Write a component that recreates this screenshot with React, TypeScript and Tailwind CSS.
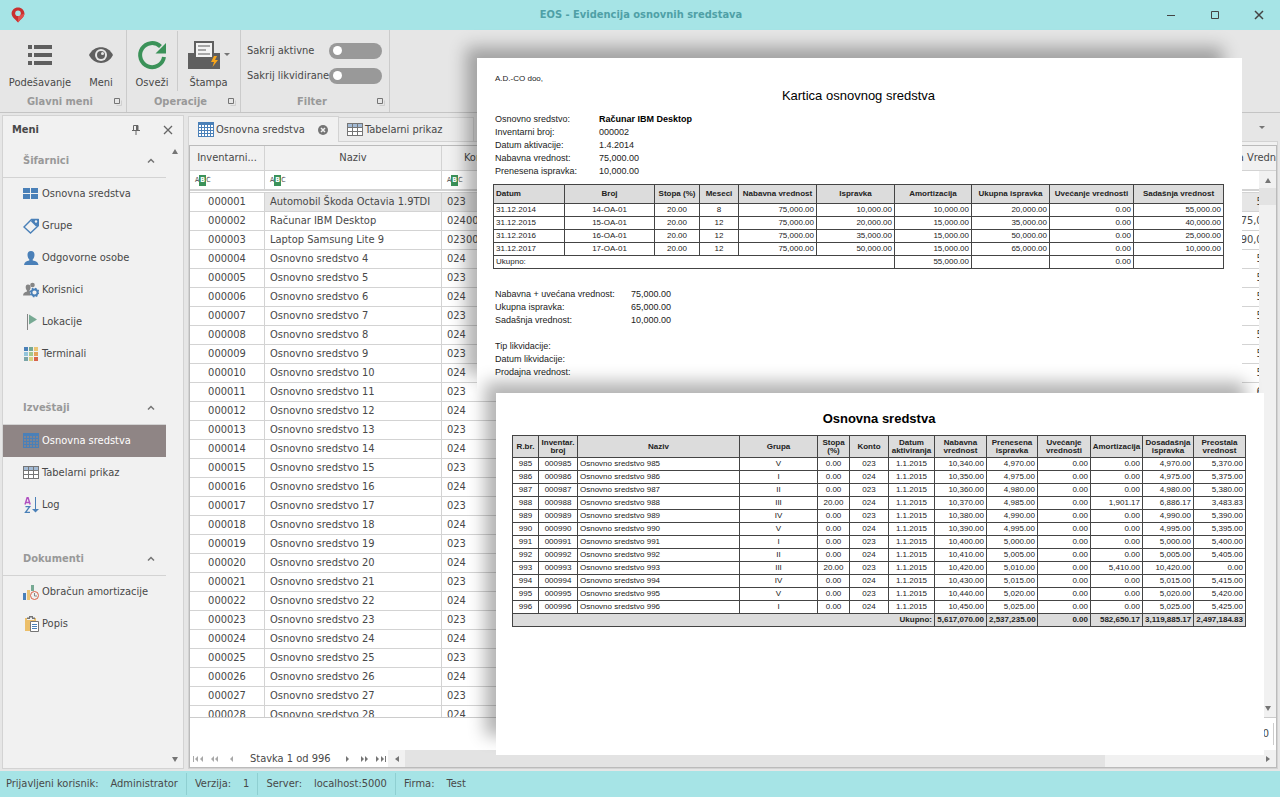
import type { ReactNode } from "react";

// ── DATA ────────────────────────────────────────────────────────────────

const NAMES: Record<number, string> = {
  1: "Automobil Škoda Octavia 1.9TDI",
  2: "Računar IBM Desktop",
  3: "Laptop Samsung Lite 9",
};
const ACCOUNTS: Record<number, string> = { 2: "02400", 3: "02300" };
const VALUES: Record<number, string> = { 2: "75,000.00", 3: "90,000.00" };

const ASSETS = Array.from({ length: 28 }, (_, i) => {
  const n = i + 1;
  return {
    id: String(n).padStart(6, "0"),
    name: NAMES[n] ?? `Osnovno sredstvo ${n}`,
    account: ACCOUNTS[n] ?? (n % 2 ? "023" : "024"),
    value: VALUES[n] ?? `${490 + n * 10}.00`,
  };
});

const CARD_HEAD = [
  "Datum",
  "Broj",
  "Stopa (%)",
  "Meseci",
  "Nabavna vrednost",
  "Ispravka",
  "Amortizacija",
  "Ukupna ispravka",
  "Uvećanje vrednosti",
  "Sadašnja vrednost",
];
const CARD_WIDTHS = [71, 90, 45, 39, 78, 78, 77, 78, 84, 90];
const CARD_ROWS = [
  ["31.12.2014", "14-OA-01", "20.00", "8", "75,000.00", "10,000.00", "10,000.00", "20,000.00", "0.00", "55,000.00"],
  ["31.12.2015", "15-OA-01", "20.00", "12", "75,000.00", "20,000.00", "15,000.00", "35,000.00", "0.00", "40,000.00"],
  ["31.12.2016", "16-OA-01", "20.00", "12", "75,000.00", "35,000.00", "15,000.00", "50,000.00", "0.00", "25,000.00"],
  ["31.12.2017", "17-OA-01", "20.00", "12", "75,000.00", "50,000.00", "15,000.00", "65,000.00", "0.00", "10,000.00"],
];

const LIST_HEAD = [
  "R.br.",
  "Inventar. broj",
  "Naziv",
  "Grupa",
  "Stopa (%)",
  "Konto",
  "Datum aktiviranja",
  "Nabavna vrednost",
  "Prenesena ispravka",
  "Uvećanje vrednosti",
  "Amortizacija",
  "Dosadašnja ispravka",
  "Preostala vrednost",
];
const LIST_WIDTHS = [26, 39, 162, 78, 32, 39, 46, 52, 51, 53, 52, 51, 52];
// [number, group, rate, cost, carried over, depreciation, to date, remaining]
const LIST_ROWS = [
  ["985", "V", "0.00", "10,340.00", "4,970.00", "0.00", "4,970.00", "5,370.00"],
  ["986", "I", "0.00", "10,350.00", "4,975.00", "0.00", "4,975.00", "5,375.00"],
  ["987", "II", "0.00", "10,360.00", "4,980.00", "0.00", "4,980.00", "5,380.00"],
  ["988", "III", "20.00", "10,370.00", "4,985.00", "1,901.17", "6,886.17", "3,483.83"],
  ["989", "IV", "0.00", "10,380.00", "4,990.00", "0.00", "4,990.00", "5,390.00"],
  ["990", "V", "0.00", "10,390.00", "4,995.00", "0.00", "4,995.00", "5,395.00"],
  ["991", "I", "0.00", "10,400.00", "5,000.00", "0.00", "5,000.00", "5,400.00"],
  ["992", "II", "0.00", "10,410.00", "5,005.00", "0.00", "5,005.00", "5,405.00"],
  ["993", "III", "20.00", "10,420.00", "5,010.00", "5,410.00", "10,420.00", "0.00"],
  ["994", "IV", "0.00", "10,430.00", "5,015.00", "0.00", "5,015.00", "5,415.00"],
  ["995", "V", "0.00", "10,440.00", "5,020.00", "0.00", "5,020.00", "5,420.00"],
  ["996", "I", "0.00", "10,450.00", "5,025.00", "0.00", "5,025.00", "5,425.00"],
];

// ── ICONS ───────────────────────────────────────────────────────────────

function PinLogo() {
  return (
    <svg className="h-4 w-4" viewBox="0 0 16 16">
      <path d="M8 0.5C4.4 0.5 1.6 3.2 1.6 6.5C1.6 9.8 5 12 8 15.6C11 12 14.4 9.8 14.4 6.5C14.4 3.2 11.6 0.5 8 0.5Z" fill="#c9302f" />
      <path d="M8 15.6C11 12 14.4 9.8 14.4 6.5L8 9Z" fill="#e0504d" />
      <circle cx="8" cy="6.2" r="2.8" fill="#a6e4e6" />
    </svg>
  );
}

function ListIcon() {
  return (
    <svg className="h-8 w-8" viewBox="0 0 32 32" fill="#5f5f5f">
      <path d="M4 6h4v4H4zM10 6h18v4H10zM4 14h4v4H4zM10 14h18v4H10zM4 22h4v4H4zM10 22h18v4H10z" />
    </svg>
  );
}

function EyeIcon() {
  return (
    <svg className="h-8 w-8" viewBox="0 0 32 32">
      <path d="M4 16C9 5.500 23 5.500 28 16C23 26.500 9 26.500 4 16Z" fill="#5f5f5f" />
      <circle cx="16" cy="16" r="6" fill="#e6e6e6" />
      <circle cx="16" cy="16" r="4" fill="#5f5f5f" />
      <circle cx="17.500" cy="14.500" r="1.500" fill="#e6e6e6" />
    </svg>
  );
}

function RefreshIcon() {
  return (
    <svg className="h-8 w-8" viewBox="0 0 32 32">
      <path d="M28 18A12 12 0 1 1 24.500 7.500" fill="none" stroke="#3b9259" strokeWidth="4" />
      <path d="M30 4V14.500H19.500Z" fill="#3b9259" />
    </svg>
  );
}

function PrintIcon() {
  return (
    <svg className="h-8 w-8" viewBox="0 0 32 32">
      <path d="M0 14H32V30H0Z" fill="#5f5f5f" />
      <path d="M6 17V2H26V17Z" fill="#5f5f5f" />
      <path d="M8 4H24V18H8Z" fill="#f3f3f3" />
      <path d="M10 7H22M10 11H18M10 15H22" stroke="#a6a6a6" strokeWidth="2" />
      <path d="M26 17L23 23H26L24.500 28L30 21H27L29 17Z" fill="#f9a61a" />
    </svg>
  );
}

function TilesIcon() {
  return (
    <svg className="h-4 w-4" viewBox="0 0 16 16" fill="#4a80b8">
      <path d="M0 2h7v5H0zM8 2h7v5H8zM0 8h7v5H0zM8 8h7v5H8z" />
    </svg>
  );
}

function TagIcon() {
  return (
    <svg className="h-4 w-4" viewBox="0 0 16 16">
      <path d="M8.500 1.500H15V8L7.500 15L1 9Z" fill="none" stroke="#4a80b8" strokeWidth="1.400" />
      <path d="M9 1H16V8L13 8.500L8 3.500Z" fill="#4a80b8" />
      <circle cx="13" cy="3.500" r="1.200" fill="#f1f1f1" />
    </svg>
  );
}

function PersonIcon() {
  return (
    <svg className="h-4 w-4" viewBox="0 0 16 16" fill="#4a80b8">
      <path d="M8 1C5.600 1 4.400 2.600 4.500 5C4.600 7 5.400 8.600 6.300 9.400V10.600C3.500 11.200 1.500 12 1 15H15.500C15 12 12.500 11.200 9.700 10.600V9.400C10.600 8.600 11.400 7 11.500 5C11.600 2.600 10.400 1 8 1Z" />
    </svg>
  );
}

function UsersIcon() {
  return (
    <svg className="h-4 w-4" viewBox="0 0 16 16">
      <circle cx="9.500" cy="3" r="2.300" fill="#858585" />
      <path d="M5 2.500C3.400 2.500 2.600 3.600 2.700 5.300C2.800 7 3.300 8 4 8.700V9.600C1.800 10.100 0.300 11 0 13.500H7V9.500L6.500 8.500C7.200 7.800 7.600 6.700 7.600 5.300C7.600 3.600 6.700 2.500 5 2.500Z" fill="#858585" />
      <circle cx="11.500" cy="10.500" r="3" fill="#f1f1f1" stroke="#4a80b8" strokeWidth="1.800" />
      <circle cx="11.500" cy="10.500" r="4.200" fill="none" stroke="#4a80b8" strokeWidth="1.400" strokeDasharray="1.600 1.700" />
    </svg>
  );
}

function FlagIcon() {
  return (
    <svg className="h-4 w-4" viewBox="0 0 16 16">
      <path d="M4.500 0V16" stroke="#858585" />
      <path d="M6 0.500L14 5.500L6 10.500Z" fill="#77a993" />
    </svg>
  );
}

function PaletteIcon() {
  return (
    <svg className="h-4 w-4" viewBox="0 0 16 16">
      <path d="M1 1h4v4H1z" fill="#4a80b8" />
      <path d="M6 1h4v4H6z" fill="#77a993" />
      <path d="M11 1h4v4h-4z" fill="#ecc574" />
      <path d="M1 6h4v4H1z" fill="#93c5dc" />
      <path d="M6 6h4v4H6z" fill="#a5c68c" />
      <path d="M11 6h4v4h-4z" fill="#e5a35a" />
      <path d="M1 11h4v4H1z" fill="#7aa5a8" />
      <path d="M6 11h4v4H6z" fill="#d8d07f" />
      <path d="M11 11h4v4h-4z" fill="#d8634a" />
    </svg>
  );
}

function SheetIcon({ lines = "#ffffff" }: { lines?: string }) {
  return (
    <svg className="h-4 w-4" viewBox="0 0 16 16" shapeRendering="crispEdges">
      <path d="M0 0h16v15H0z" fill="#4a80b8" />
      <path
        d="M1 3h2v2H1zM4 3h2v2H4zM7 3h2v2H7zM10 3h2v2h-2zM13 3h2v2h-2zM1 6h2v2H1zM4 6h2v2H4zM7 6h2v2H7zM10 6h2v2h-2zM13 6h2v2h-2zM1 9h2v2H1zM4 9h2v2H4zM7 9h2v2H7zM10 9h2v2h-2zM13 9h2v2h-2zM1 12h2v2H1zM4 12h2v2H4zM7 12h2v2H7zM10 12h2v2h-2zM13 12h2v2h-2z"
        fill={lines}
      />
    </svg>
  );
}

function TableIcon() {
  return (
    <svg className="h-4 w-4" viewBox="0 0 16 16" shapeRendering="crispEdges">
      <path d="M0 1h16v13H0z" fill="#757575" />
      <path d="M1 2h4v3H1zM6 2h4v3H6zM11 2h4v3h-4z" fill="#a3bbd6" />
      <path d="M1 6h4v3H1zM6 6h4v3H6zM11 6h4v3h-4zM1 10h4v3H1zM6 10h4v3H6zM11 10h4v3h-4z" fill="#ffffff" />
    </svg>
  );
}

function SortIcon() {
  return (
    <svg className="h-4 w-4" viewBox="0 0 16 16" fill="none">
      <path d="M2 7.500L4.200 0.500H5L7.200 7.500M3 5.500H6.300" stroke="#b04fc0" strokeWidth="1.400" />
      <path d="M2.500 9.700H6.700L2.500 15.300H7" stroke="#4a80b8" strokeWidth="1.300" />
      <path d="M12.500 0V13" stroke="#4a80b8" />
      <path d="M9 12H16L12.500 15.500Z" fill="#4a80b8" />
    </svg>
  );
}

function ChartClockIcon() {
  return (
    <svg className="h-4 w-4" viewBox="0 0 16 16">
      <path d="M0 9h3v7H0z" fill="#4a80b8" />
      <path d="M4 6h3v10H4z" fill="#ecc574" />
      <path d="M8 1h3v6H8z" fill="#77a993" />
      <circle cx="11.500" cy="11.500" r="4" fill="#f1f1f1" stroke="#d8634a" />
      <path d="M11.500 9V12H14" fill="none" stroke="#858585" />
    </svg>
  );
}

function ClipboardIcon() {
  return (
    <svg className="h-4 w-4" viewBox="0 0 16 16">
      <path d="M2 2h2v2h7V2h2v3H7v10H2z" fill="#ecbf6a" />
      <path d="M4 3V1.500H6V0H10V1.500H12V3H9V1.500H7V3Z" fill="#757575" />
      <path d="M7.500 5.500H15.500V15.500H7.500Z" fill="#ffffff" stroke="#757575" />
      <path d="M9 8.500H14M9 10.500H14M9 12.500H14" stroke="#4a80b8" />
    </svg>
  );
}

function LauncherIcon() {
  return (
    <svg className="h-2 w-2" viewBox="0 0 8 8" fill="none">
      <path d="M7.500 2.500V7.500H2.500" stroke="#cfcfcf" />
      <path d="M0.500 0.500H5.500V5.500H0.500Z" stroke="#757575" />
    </svg>
  );
}

// Small solid triangle used by scroll bars, drop-downs and the record navigator
function Arrow({ dir, color = "#757575" }: { dir: "up" | "down" | "left" | "right"; color?: string }) {
  const paths = {
    up: "M0 6L3 1L6 6Z",
    down: "M0 1L3 6L6 1Z",
    left: "M5 0L1 3L5 6Z",
    right: "M1 0L5 3L1 6Z",
  };
  return (
    <svg className="h-1.5 w-1.5" viewBox="0 0 6 6">
      <path d={paths[dir]} fill={color} />
    </svg>
  );
}

// Narrow variant for the paired arrows in the record navigator
function NavArrow({ dir, color = "#757575" }: { dir: "left" | "right"; color?: string }) {
  return (
    <svg className="h-1.5 w-1" viewBox="0 0 4 6">
      <path d={dir === "left" ? "M3 0L0 3L3 6Z" : "M1 0L4 3L1 6Z"} fill={color} />
    </svg>
  );
}

function Caret() {
  return (
    <svg className="h-1 w-1.5" viewBox="0 0 6 4">
      <path d="M0 0H6L3 3Z" fill="#757575" />
    </svg>
  );
}

// ── TITLE BAR + RIBBON ──────────────────────────────────────────────────

function TitleBar() {
  return (
    <header className="flex h-[30px] shrink-0 items-center bg-[#a6e4e6] pr-2 pl-2.5">
      <div className="flex flex-1 items-center">
        <PinLogo />
      </div>
      <h1 className="font-bold text-[#4fa0a6]">EOS - Evidencija osnovnih sredstava</h1>
      <div className="flex flex-1 items-center justify-end gap-[18px]">
        <button type="button" aria-label="Minimize" className="p-2">
          <svg className="h-2.5 w-2.5" viewBox="0 0 10 10">
            <path d="M1 5.500H9" stroke="#444444" />
          </svg>
        </button>
        <button type="button" aria-label="Maximize" className="p-2">
          <svg className="h-2.5 w-2.5" viewBox="0 0 10 10">
            <path d="M1.500 1.500H8.500V8.500H1.500Z" fill="none" stroke="#444444" />
          </svg>
        </button>
        <button type="button" aria-label="Close" className="p-2">
          <svg className="h-2.5 w-2.5" viewBox="0 0 10 10">
            <path d="M1 1L9 9M9 1L1 9" stroke="#444444" strokeWidth="1.500" />
          </svg>
        </button>
      </div>
    </header>
  );
}

function RibbonGroup({ title, className, children }: { title: string; className: string; children: ReactNode }) {
  return (
    <section className={`flex shrink-0 flex-col border-r border-[#cbcbcb] ${className}`}>
      <div className="flex flex-1 items-center">{children}</div>
      <div className="flex h-5 items-center pr-1 pl-1.5">
        <h2 className="flex-1 text-center font-bold text-[#999999]">{title}</h2>
        <button type="button" aria-label={`${title} – opcije`}>
          <LauncherIcon />
        </button>
      </div>
    </section>
  );
}

function RibbonButton({ label, className, children }: { label: string; className: string; children: ReactNode }) {
  return (
    <button type="button" className={`flex shrink-0 flex-col items-center gap-1 pt-2 ${className}`}>
      {children}
      <span className="leading-4">{label}</span>
    </button>
  );
}

function Toggle({ label }: { label: string }) {
  return (
    <label className="flex items-center justify-between whitespace-nowrap">
      {label}
      <input
        type="checkbox"
        role="switch"
        className="flex h-4 w-[53px] shrink-0 appearance-none items-center rounded-full bg-[#999999] pl-1 before:block before:h-[9px] before:w-[9px] before:rounded-full before:bg-white checked:justify-end checked:bg-[#4a80b8] checked:pr-1"
      />
    </label>
  );
}

function Ribbon() {
  return (
    <div className="flex h-[83px] shrink-0 border-b border-[#c4c4c4]">
      <RibbonGroup title="Glavni meni" className="w-[127px]">
        <RibbonButton label="Podešavanje" className="w-20">
          <ListIcon />
        </RibbonButton>
        <RibbonButton label="Meni" className="w-[42px]">
          <EyeIcon />
        </RibbonButton>
      </RibbonGroup>
      <RibbonGroup title="Operacije" className="w-[114px]">
        <RibbonButton label="Osveži" className="w-[50px]">
          <RefreshIcon />
        </RibbonButton>
        <RibbonButton label="Štampa" className="w-[62px] border-l border-[#cbcbcb]">
          <span className="flex items-center gap-1">
            <PrintIcon />
            <Caret />
          </span>
        </RibbonButton>
      </RibbonGroup>
      <RibbonGroup title="Filter" className="w-[149px]">
        <div className="flex w-full flex-col gap-[9px] pt-1 pr-[7px] pl-1.5">
          <Toggle label="Sakrij aktivne" />
          <Toggle label="Sakrij likvidirane" />
        </div>
      </RibbonGroup>
    </div>
  );
}

// ── SIDE MENU ───────────────────────────────────────────────────────────

function MenuGroup({ title, children }: { title: string; children: ReactNode }) {
  return (
    <section className="mb-[21px]">
      <button
        type="button"
        className="flex h-[34px] w-full items-center justify-between border-b border-[#d3d3d3] pr-[11px] pl-5 font-bold text-[#999999]"
      >
        {title}
        <svg className="h-2 w-2" viewBox="0 0 8 8">
          <path d="M1 5.500L4 2.500L7 5.500" fill="none" stroke="#757575" strokeWidth="1.500" />
        </svg>
      </button>
      <ul>{children}</ul>
    </section>
  );
}

function MenuItem({ label, icon, active = false }: { label: string; icon: ReactNode; active?: boolean }) {
  return (
    <li>
      <a
        href="#"
        className={`flex h-8 items-center gap-[3px] pl-5 ${active ? "bg-[#8f8585] text-white" : ""}`}
      >
        {icon}
        {label}
      </a>
    </li>
  );
}

function SideMenu() {
  return (
    <nav className="flex w-[182px] shrink-0 flex-col border border-[#d3d3d3] bg-[#f1f1f1]">
      <div className="flex h-7 shrink-0 items-center pr-2.5 pl-[9px]">
        <h2 className="flex-1 font-bold">Meni</h2>
        <div className="flex gap-[22px]">
          <button type="button" aria-label="Zakači meni">
            <svg className="h-2.5 w-2.5" viewBox="0 0 10 10">
              <path d="M2.500 0.500H7V5.500M2.500 0.500V5.500M1 5.500H9M5 6V10" fill="none" stroke="#666666" />
              <path d="M5 1h2v5H5z" fill="#666666" />
            </svg>
          </button>
          <button type="button" aria-label="Zatvori meni">
            <svg className="h-2.5 w-2.5" viewBox="0 0 10 10">
              <path d="M1 1L9 9M9 1L1 9" stroke="#666666" strokeWidth="1.300" />
            </svg>
          </button>
        </div>
      </div>
      <div className="flex min-h-0 flex-1">
        <div className="flex-1 overflow-hidden">
          <MenuGroup title="Šifarnici">
            <MenuItem label="Osnovna sredstva" icon={<TilesIcon />} />
            <MenuItem label="Grupe" icon={<TagIcon />} />
            <MenuItem label="Odgovorne osobe" icon={<PersonIcon />} />
            <MenuItem label="Korisnici" icon={<UsersIcon />} />
            <MenuItem label="Lokacije" icon={<FlagIcon />} />
            <MenuItem label="Terminali" icon={<PaletteIcon />} />
          </MenuGroup>
          <MenuGroup title="Izveštaji">
            <MenuItem label="Osnovna sredstva" icon={<SheetIcon lines="#7f8390" />} active />
            <MenuItem label="Tabelarni prikaz" icon={<TableIcon />} />
            <MenuItem label="Log" icon={<SortIcon />} />
          </MenuGroup>
          <MenuGroup title="Dokumenti">
            <MenuItem label="Obračun amortizacije" icon={<ChartClockIcon />} />
            <MenuItem label="Popis" icon={<ClipboardIcon />} />
          </MenuGroup>
        </div>
        <div className="flex w-[17px] flex-col items-center justify-between pt-1 pb-1.5">
          <Arrow dir="up" />
          <Arrow dir="down" />
        </div>
      </div>
    </nav>
  );
}

// ── ASSET GRID ──────────────────────────────────────────────────────────

function GridCols() {
  return (
    <colgroup>
      <col className="w-[75px]" />
      <col className="w-[177px]" />
      <col className="w-[73px]" />
      <col />
      <col className="w-[100px]" />
    </colgroup>
  );
}

function FilterCell({ label }: { label: string }) {
  return (
    <td className="h-5 border-r border-b-2 border-[#d3d3d3] p-0">
      <label className="flex items-center pl-[5px] text-[7px] leading-[11px]">
        <span aria-hidden="true">A</span>
        <span aria-hidden="true" className="bg-[#3b9259] px-px font-bold text-white">
          B
        </span>
        <span aria-hidden="true">C</span>
        <input type="text" aria-label={`Filter: ${label}`} className="ml-1 h-3 min-w-0 flex-1 outline-none" />
      </label>
    </td>
  );
}

const CELL = "h-[19px] overflow-hidden border-r border-b border-[#d3d3d3] p-0 leading-4 whitespace-nowrap";

function AssetGrid() {
  return (
    <div className="flex min-h-0 flex-1 flex-col border border-[#bbbbbb] bg-white">
      <div className="shrink-0 overflow-hidden">
        <table className="w-[calc(100%+20px)] table-fixed border-separate border-spacing-0 bg-[#f1f1f1]">
          <GridCols />
          <thead>
            <tr>
              {["Inventarni...", "Naziv", "Konto", "", "Nabavna Vrednost"].map((h, i) => (
                <th key={i} className="h-[25px] border-r border-b border-[#d3d3d3] p-0 font-normal whitespace-nowrap">
                  {h}
                </th>
              ))}
            </tr>
          </thead>
        </table>
      </div>

      <div className="flex min-h-0 flex-1 border-b border-[#cccccc]">
        <div className="min-w-0 flex-1 overflow-hidden">
          <table className="w-[calc(100%+37px)] table-fixed border-separate border-spacing-0">
            <GridCols />
            <tbody>
              <tr>
                <FilterCell label="Inventarni broj" />
                <FilterCell label="Naziv" />
                <FilterCell label="Konto" />
                <td colSpan={2} className="border-b-2 border-[#d3d3d3] p-0" />
              </tr>
              <tr>
                <td colSpan={5} className="h-0.5 border-b border-[#d3d3d3] p-0" />
              </tr>
              {ASSETS.map((a, i) => (
                <tr key={a.id} className={i === 0 ? "bg-[#e6e6e6]" : ""}>
                  <td className={`${CELL} bg-white text-center`}>{a.id}</td>
                  <td className={`${CELL} pl-[5px]`}>{a.name}</td>
                  <td className={`${CELL} pl-[5px]`}>{a.account}</td>
                  <td className={CELL} />
                  <td className={`${CELL} pr-1 text-right`}>{a.value}</td>
                </tr>
              ))}
            </tbody>
          </table>
        </div>
        <div className="flex w-[17px] flex-col items-center bg-[#f1f1f1] pb-1.5">
          <div className="flex h-[17px] items-center">
            <Arrow dir="up" />
          </div>
          <div className="h-[17px] w-full bg-[#e3e3e3]" />
          <div className="flex-1" />
          <Arrow dir="down" />
        </div>
      </div>

      <div className="flex h-8 shrink-0 items-center justify-end pr-0.5">
        <output className="flex h-[22px] items-center border-r border-[#cccccc] pr-1">5,617,070.00</output>
      </div>

      <div className="flex h-[17px] shrink-0 items-center">
        <div className="flex w-[198px] items-center pl-[3px]">
          <button type="button" aria-label="Prvi" className="flex w-[18px] items-center gap-px">
            <span className="h-1.5 w-px bg-[#a8a8a8]" />
            <NavArrow dir="left" color="#a8a8a8" />
            <NavArrow dir="left" color="#a8a8a8" />
          </button>
          <button type="button" aria-label="Prethodna strana" className="flex w-[19px]">
            <NavArrow dir="left" color="#a8a8a8" />
            <NavArrow dir="left" color="#a8a8a8" />
          </button>
          <button type="button" aria-label="Prethodni" className="flex w-5">
            <NavArrow dir="left" color="#a8a8a8" />
          </button>
          <span className="w-[95px] whitespace-nowrap">Stavka 1 od 996</span>
          <button type="button" aria-label="Sledeći" className="flex w-[15px]">
            <NavArrow dir="right" />
          </button>
          <button type="button" aria-label="Sledeća strana" className="flex w-[15px]">
            <NavArrow dir="right" />
            <NavArrow dir="right" />
          </button>
          <button type="button" aria-label="Poslednji" className="flex items-center gap-px">
            <NavArrow dir="right" />
            <NavArrow dir="right" />
            <span className="h-1.5 w-px bg-[#757575]" />
          </button>
        </div>
        <div className="flex h-full flex-1 items-center bg-[#f1f1f1]">
          <div className="flex w-[17px] justify-center">
            <Arrow dir="left" />
          </div>
          <div className="flex h-full flex-1">
            <div className="h-full w-[82%] bg-[#e3e3e3]" />
          </div>
          <div className="flex w-[17px] justify-center">
            <Arrow dir="right" />
          </div>
        </div>
      </div>
    </div>
  );
}

function Workspace() {
  return (
    <main className="flex min-w-0 flex-1 flex-col">
      <div className="flex h-[26px] shrink-0 items-end">
        <button
          type="button"
          className="relative -mb-px flex h-[26px] w-[151px] items-center gap-0.5 border border-b-0 border-[#d3d3d3] bg-[#f1f1f1] pl-[9px]"
        >
          <SheetIcon />
          <span className="flex-1 text-left whitespace-nowrap">Osnovna sredstva</span>
          <svg className="mr-2.5 h-2.5 w-2.5" viewBox="0 0 10 10">
            <circle cx="5" cy="5" r="5" fill="#757575" />
            <path d="M3 3L7 7M7 3L3 7" stroke="#f1f1f1" strokeWidth="1.500" />
          </svg>
        </button>
        <button
          type="button"
          className="flex h-6 w-[135px] items-center gap-0.5 border-t border-r border-[#d3d3d3] bg-[#ececec] pl-2"
        >
          <TableIcon />
          Tabelarni prikaz
        </button>
        <div className="flex h-full flex-1 items-center justify-end pr-[13px]">
          <button type="button" aria-label="Lista kartica">
            <Caret />
          </button>
        </div>
      </div>
      <div className="flex min-h-0 flex-1 flex-col border border-[#d3d3d3] bg-[#f1f1f1] pt-[3px]">
        <AssetGrid />
      </div>
    </main>
  );
}

// ── STATUS BAR ──────────────────────────────────────────────────────────

function StatusItem({ label, value }: { label: string; value: string }) {
  return (
    <div className="flex h-[22px] items-center gap-3 border-r border-[#8fcfd1] px-2 whitespace-nowrap first:pl-1.5 last:border-r-0">
      <span>{label}</span>
      <span>{value}</span>
    </div>
  );
}

function StatusBar() {
  return (
    <footer className="flex h-[26px] shrink-0 items-center bg-[#a6e4e6]">
      <StatusItem label="Prijavljeni korisnik:" value="Administrator" />
      <StatusItem label="Verzija:" value="1" />
      <StatusItem label="Server:" value="localhost:5000" />
      <StatusItem label="Firma:" value="Test" />
    </footer>
  );
}

// ── PRINTED REPORTS (float over the main window) ────────────────────────

const SHEET =
  "absolute bg-white font-['Liberation_Sans',Arial,sans-serif] text-[#222222] shadow-[-15px_-15px_16px_-4px_rgba(0,0,0,0.3)]";
const REPORT_TABLE = "w-full table-fixed border-collapse text-[8px] leading-[8px]";
const REPORT_TH = "border border-[#444444] bg-[#dcdcdc] p-0 font-bold";
const REPORT_TD = "h-[13px] overflow-hidden border border-[#444444] px-0.5 py-0 whitespace-nowrap";

function ReportCols({ widths }: { widths: number[] }) {
  return (
    <colgroup>
      {widths.map((w, i) => (
        <col key={i} style={{ width: w }} />
      ))}
    </colgroup>
  );
}

function Line({ label, value, className }: { label: string; value?: string; className: string }) {
  return (
    <div className="flex">
      <dt className={className}>{label}</dt>
      <dd>{value}</dd>
    </div>
  );
}

function AssetCard() {
  return (
    <article className={`${SHEET} top-[58px] right-[38px] left-[477px] h-[336px] pt-3.5 pr-[18px] pl-4`}>
      <p className="pl-0.5 text-[8px] leading-[13px]">A.D.-CO doo,</p>
      <h2 className="mt-1 text-center text-[13px] leading-[14px] text-black">Kartica osnovnog sredstva</h2>
      <dl className="mt-2.5 pl-0.5 text-[9px] leading-[13px]">
        <div className="flex">
          <dt className="w-[104px]">Osnovno sredstvo:</dt>
          <dd className="font-bold text-black">Računar IBM Desktop</dd>
        </div>
        <Line className="w-[104px]" label="Inventarni broj:" value="000002" />
        <Line className="w-[104px]" label="Datum aktivacije:" value="1.4.2014" />
        <Line className="w-[104px]" label="Nabavna vrednost:" value="75,000.00" />
        <Line className="w-[104px]" label="Prenesena ispravka:" value="10,000.00" />
      </dl>
      <table className={`mt-1.5 ${REPORT_TABLE}`}>
        <ReportCols widths={CARD_WIDTHS} />
        <thead>
          <tr>
            {CARD_HEAD.map((h, i) => (
              <th key={h} className={`h-[19px] whitespace-nowrap ${REPORT_TH} ${i === 0 ? "pl-0.5 text-left" : ""}`}>
                {h}
              </th>
            ))}
          </tr>
        </thead>
        <tbody>
          {CARD_ROWS.map((row) => (
            <tr key={row[0]}>
              {row.map((v, i) => (
                <td key={i} className={`${REPORT_TD} ${i === 0 ? "text-left" : i < 4 ? "text-center" : "text-right"}`}>
                  {v}
                </td>
              ))}
            </tr>
          ))}
          <tr>
            <td colSpan={6} className={REPORT_TD}>
              Ukupno:
            </td>
            <td className={`${REPORT_TD} text-right`}>55,000.00</td>
            <td className={REPORT_TD} />
            <td className={`${REPORT_TD} text-right`}>0.00</td>
            <td className={REPORT_TD} />
          </tr>
        </tbody>
      </table>
      <dl className="mt-[19px] pl-0.5 text-[9px] leading-[13px]">
        <Line className="w-[136px]" label="Nabavna + uvećana vrednost:" value="75,000.00" />
        <Line className="w-[136px]" label="Ukupna ispravka:" value="65,000.00" />
        <Line className="w-[136px]" label="Sadašnja vrednost:" value="10,000.00" />
      </dl>
      <dl className="mt-[13px] pl-0.5 text-[9px] leading-[13px]">
        <Line className="w-[136px]" label="Tip likvidacije:" />
        <Line className="w-[136px]" label="Datum likvidacije:" />
        <Line className="w-[136px]" label="Prodajna vrednost:" />
      </dl>
    </article>
  );
}

function AssetList() {
  return (
    <article className={`${SHEET} top-[393px] right-4 left-[496px] h-[362px] pt-[18px] pr-[18px] pl-4`}>
      <h2 className="text-center text-[13px] leading-4 font-bold text-black">Osnovna sredstva</h2>
      <table className={`mt-2 ${REPORT_TABLE}`}>
        <ReportCols widths={LIST_WIDTHS} />
        <thead>
          <tr>
            {LIST_HEAD.map((h) => (
              <th key={h} className={`h-[22px] ${REPORT_TH}`}>
                {h}
              </th>
            ))}
          </tr>
        </thead>
        <tbody>
          {LIST_ROWS.map(([no, group, rate, cost, carried, depreciation, toDate, remaining]) => (
            <tr key={no}>
              <td className={`${REPORT_TD} text-center`}>{no}</td>
              <td className={`${REPORT_TD} text-center`}>{`000${no}`}</td>
              <td className={REPORT_TD}>{`Osnovno sredstvo ${no}`}</td>
              <td className={`${REPORT_TD} text-center`}>{group}</td>
              <td className={`${REPORT_TD} text-center`}>{rate}</td>
              <td className={`${REPORT_TD} text-center`}>{Number(no) % 2 ? "023" : "024"}</td>
              <td className={`${REPORT_TD} text-center`}>1.1.2015</td>
              <td className={`${REPORT_TD} text-right`}>{cost}</td>
              <td className={`${REPORT_TD} text-right`}>{carried}</td>
              <td className={`${REPORT_TD} text-right`}>0.00</td>
              <td className={`${REPORT_TD} text-right`}>{depreciation}</td>
              <td className={`${REPORT_TD} text-right`}>{toDate}</td>
              <td className={`${REPORT_TD} text-right`}>{remaining}</td>
            </tr>
          ))}
        </tbody>
        <tfoot>
          <tr className="bg-[#dcdcdc] text-right font-bold">
            <td colSpan={7} className={REPORT_TD}>
              Ukupno:
            </td>
            {["5,617,070.00", "2,537,235.00", "0.00", "582,650.17", "3,119,885.17", "2,497,184.83"].map((v) => (
              <td key={v} className={REPORT_TD}>
                {v}
              </td>
            ))}
          </tr>
        </tfoot>
      </table>
    </article>
  );
}

export default function App() {
  return (
    <div className="relative flex h-screen flex-col overflow-hidden bg-[#e6e6e6] font-['DejaVu_Sans_Condensed','Noto_Sans',sans-serif] text-[11px] leading-4 text-[#484848]">
      <TitleBar />
      <Ribbon />
      <div className="flex min-h-0 flex-1 gap-1 px-0.5 py-0.5">
        <SideMenu />
        <Workspace />
      </div>
      <StatusBar />
      <AssetCard />
      <AssetList />
    </div>
  );
}
